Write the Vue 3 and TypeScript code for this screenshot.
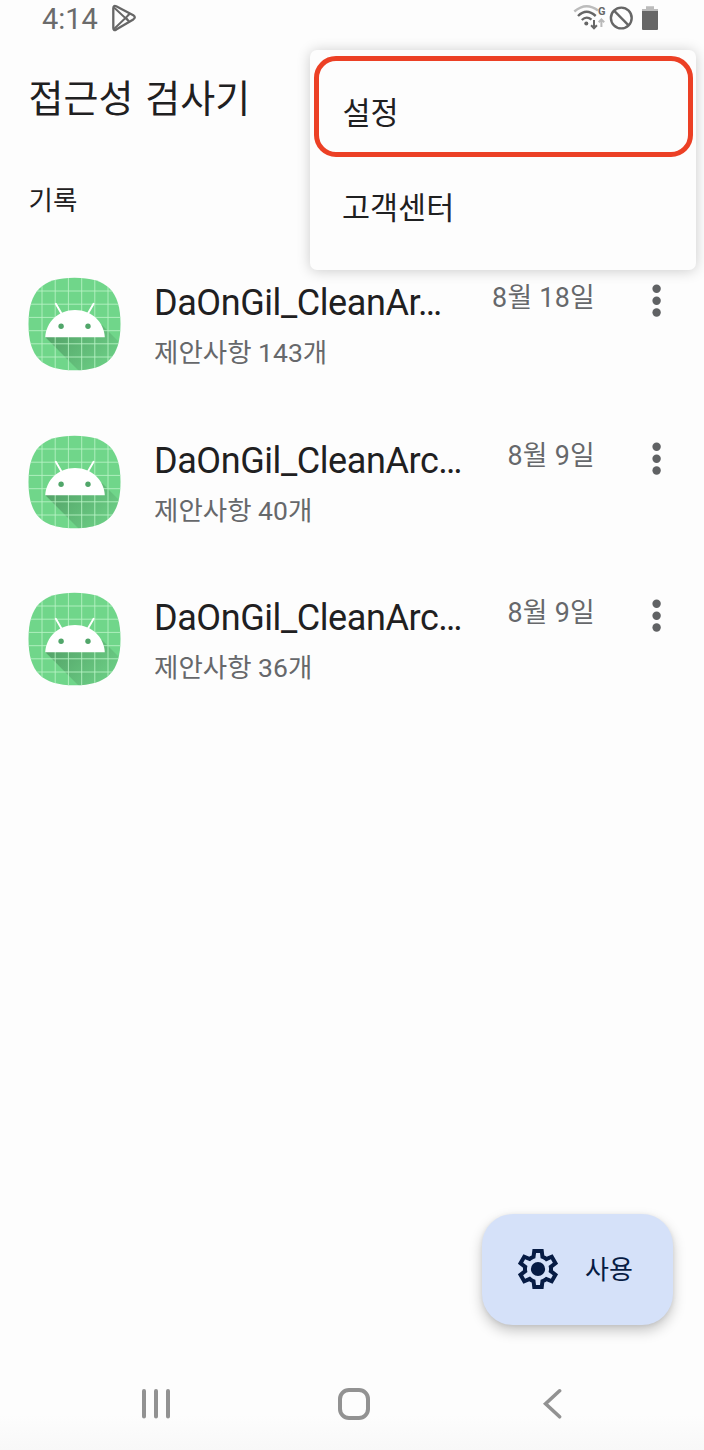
<script setup lang="ts">
interface HistoryEntry {
  name: string
  suggestions: string
  date: string
}

const entries: HistoryEntry[] = [
  { name: 'DaOnGil_CleanAr…', suggestions: '제안사항 143개', date: '8월 18일' },
  { name: 'DaOnGil_CleanArc…', suggestions: '제안사항 40개', date: '8월 9일' },
  { name: 'DaOnGil_CleanArc…', suggestions: '제안사항 36개', date: '8월 9일' },
]
const gridLines: number[] = [14, 27.2, 40.4, 53.7, 66.8, 80]
</script>

<template>
  <div class="screen">
    <header class="status">
      <div class="status-left">
        <span class="clock">4:14</span>
        <svg class="play" width="26" height="28" viewBox="0 0 26 28" fill="none" stroke="#676767" stroke-linejoin="round">
          <path d="M2.3 4.2Q2.3 1 5.2 2.3L22.3 11.2Q25.3 13.2 22.3 15.4L5.2 25.6Q2.3 27 2.3 24Z" stroke-width="2.3" />
          <path d="M3 3.5L18.6 18M3 25L18.6 10M18.2 9.8L15 13.7L18.2 17.6" stroke-width="1.9" />
        </svg>
      </div>
      <div class="status-right">
        <svg width="90" height="32" viewBox="0 0 90 32" fill="none">
          <path d="M1.3 11.5Q13 1.5 25 10.5" stroke="#bcbcbc" stroke-width="2.4" />
          <path d="M5 16Q13.5 7.6 22.7 16" stroke="#666" stroke-width="2.4" />
          <path d="M8.8 20Q13.5 15.4 18.5 19.7" stroke="#666" stroke-width="2.3" />
          <circle cx="13.3" cy="23.5" r="2" fill="#666" />
          <path d="M21 20V28M18.1 25.2L21 28.2L23.9 25.2" stroke="#666" stroke-width="2" />
          <path d="M28.4 27V20M25.7 22.2L28.4 19.4L31.2 22.2" stroke="#b9b9b9" stroke-width="2" />
          <text x="25" y="15.2" class="net">G</text>
          <circle cx="48.3" cy="18" r="10.4" stroke="#666" stroke-width="2.4" />
          <path d="M41 10.7L55.6 25.3" stroke="#666" stroke-width="2.4" />
          <path d="M73 6.3H81V9H85V12H69V9H73Z" fill="#bbb" />
          <path d="M69 11H85V29Q85 30 84 30H70Q69 30 69 29Z" fill="#666" />
        </svg>
      </div>
    </header>

    <h1 class="title">접근성 검사기</h1>
    <h2 class="section">기록</h2>

    <main class="list">
      <article v-for="(entry, i) in entries" :key="i" class="row">
        <svg class="app-icon" width="93" height="94" viewBox="0 0 93 94">
          <defs>
            <clipPath :id="`tile-${i}`">
              <path d="M46.5 .7C79 .7 92.5 14 92.5 47S79 93.3 46.5 93.3S.5 80 .5 47S14 .7 46.5 .7Z" />
            </clipPath>
            <linearGradient :id="`shade-${i}`" x1="30" y1="45" x2="75" y2="90" gradientUnits="userSpaceOnUse">
              <stop offset="0" stop-color="#2d5c3a" stop-opacity=".43" />
              <stop offset="1" stop-color="#2d5c3a" stop-opacity=".08" />
            </linearGradient>
          </defs>
          <g :clip-path="`url(#tile-${i})`">
            <rect width="93" height="94" fill="#70d68a" />
            <path d="M17.4 60.3L51 94H93V67L74 48Z" :fill="`url(#shade-${i})`" />
            <g stroke="#b8f3c5" stroke-width="1" stroke-opacity=".85">
              <line v-for="p in gridLines" :key="`v${p}`" :x1="p" :x2="p" y1="0" y2="94" />
              <line v-for="p in gridLines" :key="`h${p}`" :y1="p" :y2="p" x1="0" x2="93" />
            </g>
            <path d="M27.8 26.7L33.6 36.8M65.6 26.7L59.8 36.8" stroke="#fff" stroke-width="1.9" stroke-linecap="round" />
            <path d="M17.2 60.3C18 45 30 32.9 47 32.9S76 45 76.8 60.3Z" fill="#fff" />
            <circle cx="33.1" cy="49.3" r="2.7" fill="#51a66a" />
            <circle cx="60" cy="49.3" r="2.7" fill="#51a66a" />
          </g>
        </svg>
        <div class="info">
          <div class="name">{{ entry.name }}</div>
          <div class="sub">{{ entry.suggestions }}</div>
        </div>
        <div class="date">{{ entry.date }}</div>
        <svg class="more" width="10" height="34" viewBox="0 0 10 34" fill="#606264">
          <circle cx="4.6" cy="4.8" r="4.2" />
          <circle cx="4.6" cy="16.7" r="4.2" />
          <circle cx="4.6" cy="28.5" r="4.2" />
        </svg>
      </article>
    </main>

    <div class="menu">
      <div class="menu-item selected">설정</div>
      <div class="menu-item">고객센터</div>
    </div>

    <button class="fab">
      <svg width="48" height="48" viewBox="0 -960 960 960" fill="#061b44">
        <path d="m370-80-16-128q-13-5-24.5-12T307-235l-119 50L78-375l103-78q-1-7-1-13.5v-27q0-6.5 1-13.5L78-585l110-190 119 50q11-8 23-15t24-12l16-128h220l16 128q13 5 24.5 12t22.5 15l119-50 110 190-103 78q1 7 1 13.5v27q0 6.5-2 13.5l103 78-110 190-118-50q-11 8-23 15t-24 12L590-80H370Zm70-80h79l14-106q31-8 57.5-23.5T639-327l99 41 39-68-86-65q5-14 7-29.5t2-31.5q0-16-2-31.5t-7-29.5l86-65-39-68-99 42q-22-23-48.5-38.5T533-694l-13-106h-79l-14 106q-31 8-57.5 23.5T321-633l-99-41-39 68 86 64q-5 15-7 30t-2 32q0 16 2 31t7 30l-86 65 39 68 99-42q22 23 48.5 38.5T427-266l13 106Z" />
        <circle cx="480" cy="-480" r="142" />
      </svg>
      <span class="fab-label">사용</span>
    </button>

    <nav class="nav">
      <svg width="30" height="34" viewBox="0 0 30 34" stroke="#929292" stroke-width="4" stroke-linecap="round">
        <path d="M3 4V29.5M15 4V29.5M27 4V29.5" />
      </svg>
      <svg class="home" width="34" height="34" viewBox="0 0 34 34" fill="none" stroke="#929292" stroke-width="4">
        <rect x="3" y="3" width="28" height="28" rx="9" />
      </svg>
      <svg class="back" width="20" height="34" viewBox="0 0 20 34" fill="none" stroke="#929292" stroke-width="3.6" stroke-linecap="round">
        <path d="M17.6 3.8L3.6 16.8L17.6 29.8" />
      </svg>
    </nav>
  </div>
</template>

<style>
body {
  margin: 0;
  background: #fdfdfd;
}
</style>

<style scoped>
.screen {
  position: relative;
  box-sizing: border-box;
  width: 704px;
  height: 1450px;
  overflow: hidden;
  display: flex;
  flex-direction: column;
  background: linear-gradient(#fdfdfd 0 1415px, #f8f8f8 1450px);
  color: #1f2021;
  font-family: Roboto, "Noto Sans CJK KR", sans-serif;
}
.status {
  height: 38px;
  display: flex;
  justify-content: space-between;
  padding: 0 41px 0 42px;
}
.status-left {
  display: flex;
  align-items: flex-start;
  gap: 13px;
}
.clock {
  font-size: 29px;
  line-height: 38px;
  color: #6b6b6b;
}
.play {
  margin-top: 4px;
}
.net {
  font: 700 11px Roboto, sans-serif;
  fill: #666;
}
.title {
  margin: 32px 0 0 28.5px;
  height: 58px;
  line-height: 58px;
  font-size: 38px;
  font-weight: 400;
  word-spacing: 2.5px;
}
.section {
  margin: 53px 0 0 28.5px;
  height: 40px;
  line-height: 40px;
  font-size: 26.5px;
  font-weight: 400;
}
.list {
  margin-top: 56px;
}
.row {
  display: flex;
  align-items: flex-start;
  height: 157.6px;
  padding: 0 42px 0 28px;
}
.info {
  flex: 1;
  margin-left: 33px;
  white-space: nowrap;
}
.name {
  margin-top: 1px;
  font-size: 36px;
  line-height: 50px;
  letter-spacing: -.42px;
}
.sub {
  margin-top: 5px;
  font-size: 26.5px;
  line-height: 40.6px;
  color: #66686b;
}
.date {
  font-size: 26.8px;
  line-height: 42.6px;
  letter-spacing: .3px;
  color: #66686b;
}
.more {
  margin: 7px 0 0 57px;
}
.menu {
  position: absolute;
  left: 310px;
  top: 50px;
  width: 386px;
  height: 220px;
  box-sizing: border-box;
  padding: 6px 3px 0 4px;
  border-radius: 7px;
  background: #fdfdfd;
  box-shadow: 0 1px 14px rgba(0, 0, 0, .2);
}
.menu-item {
  box-sizing: border-box;
  height: 101px;
  padding-left: 28px;
  line-height: 104px;
  font-size: 30.5px;
}
.menu-item.selected {
  border: 5px solid #ec4025;
  border-radius: 22px;
  padding-left: 23.5px;
  line-height: 106px;
}
.fab {
  position: absolute;
  left: 482px;
  top: 1214px;
  width: 190.5px;
  height: 111px;
  display: flex;
  align-items: center;
  gap: 23.5px;
  padding: 0 0 1px 31.5px;
  border: 0;
  border-radius: 31px;
  background: #d5e1f9;
  color: #061b44;
  font: 400 26px Roboto, "Noto Sans CJK KR", sans-serif;
  box-shadow: 0 6px 13px rgba(0, 0, 0, .22), 0 1px 4px rgba(0, 0, 0, .08);
}
.fab-label {
  padding-bottom: 4px;
}
.nav {
  margin-top: auto;
  height: 63px;
  display: flex;
  align-items: flex-start;
  padding-left: 141px;
}
.home {
  margin-left: 166px;
}
.back {
  margin-left: 171px;
}
</style>
